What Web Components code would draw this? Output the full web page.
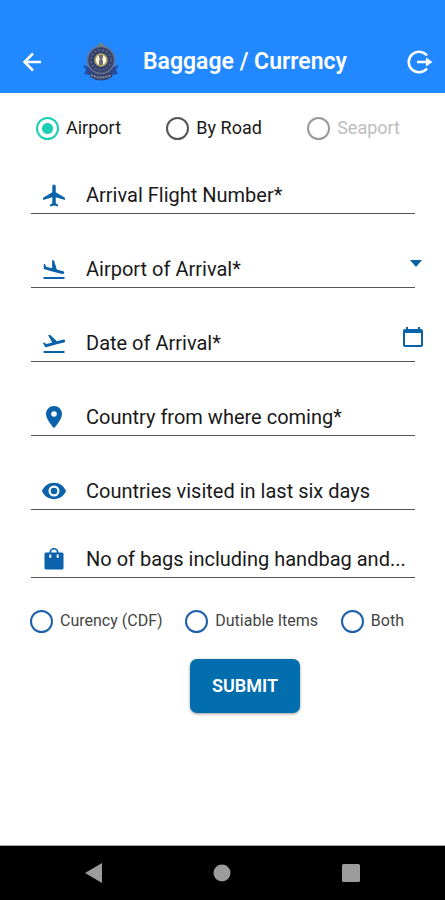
<!DOCTYPE html>
<html lang="en">
<head>
<meta charset="utf-8">
<meta name="viewport" content="width=device-width, initial-scale=1">
<title>Baggage / Currency</title>
<style>
  :root { --brand: #2188ff; --accent: #0a62ab; --submit: #036eae; }
  body { margin: 0; background: #fff; color: #191919; font-family: Roboto, "Liberation Sans", sans-serif; }
</style>
</head>
<body>
<declaration-page></declaration-page>

<script>
const icons = {
  flight: '<path d="M21 16v-2l-8-5V3.500a1.500 1.500 0 0 0-3 0V9l-8 5v2l8-2.500V19l-2 1.500V22l3.500-1 3.500 1v-1.500L13 19v-5.500l8 2.500z" transform="matrix(1.150 0 0 1.100 -1.200 -.7)"/>',
  landing: '<path d="M1.500 20h21v2h-21zM9.680 14.270l4.350 1.160 6.310 1.620c.8.210 1.620-.260 1.840-1.060.210-.8-.260-1.620-1.060-1.840l-6.310-1.620-2.760-9.020L10.120 3v8.280L4.150 9.650l-.930-2.320-1.450-.390v5.170l1.600.430 6.310 1.730z"/>',
  takeoff: '<path d="M1.500 20h21v2h-21zM23.070 9.640c-.210-.8-1.040-1.280-1.840-1.060L14.920 10.200l-6.900-6.430-1.930.510 4.140 7.170-5.970 1.530-1.970-1.540-1.450.390 1.820 3.160.770 1.330 1.600-.430 6.310-1.620 4.350-1.160L22 11.490c.810-.230 1.280-1.050 1.070-1.850z"/>',
  place: '<path d="M12 1C7.600 1 4 4.500 4 8.900 4 14.800 12 23 12 23s8-8.200 8-14.100C20 4.500 16.400 1 12 1zm0 10.800a2.800 2.800 0 1 1 0-5.600 2.800 2.800 0 0 1 0 5.600z"/>',
  eye: '<path d="M12 3.800C6.500 3.800 1.900 7.200 0 12c1.900 4.800 6.500 8.200 12 8.200s10.100-3.400 12-8.200c-1.900-4.800-6.500-8.200-12-8.200zM12 17.500a5.500 5.500 0 1 1 0-11 5.500 5.500 0 0 1 0 11zm0-8.800a3.300 3.300 0 1 0 0 6.600 3.300 3.300 0 0 0 0-6.600z"/>',
  bag: '<path fill-rule="evenodd" d="M2.500 7Q2.500 5.500 4 5.500H7.500V5a4.500 4 0 0 1 9 0V5.500H20Q21.500 5.500 21.500 7V21q0 1.500-1.500 1.500h-16Q2.500 22.500 2.500 21zM9.300 5.500h5.400V5a2.700 2.400 0 0 0-5.400 0zM7.300 7.500v2.500a1 1 0 0 0 2 0V7.500zm7.400 0v2.500a1 1 0 0 0 2 0V7.500z"/>',
};

class AppEmblem extends HTMLElement {
  constructor() {
    super();
    this.attachShadow({ mode: 'open' }).innerHTML = `
      <style>:host { display: block; width: 38px; height: 40px; } svg { display: block; }</style>
      <svg width="38" height="40" viewBox="0 0 38 40" role="img" aria-label="Customs emblem">
        <path d="M1 23l6 2 24 0 6-2-3 5 2 4-6 1q-11 9-22 0l-6-1 2-4z" fill="#294b9c"/>
        <circle cx="19" cy="18" r="13.500" fill="#354373" stroke="#6e7187" stroke-width="1.500"/>
        <circle cx="19" cy="18" r="10" fill="none" stroke="#62677c" stroke-width="1.500" stroke-dasharray="2 2"/>
        <circle cx="19" cy="18" r="6" fill="#fff8dc" stroke="#b1a45c" stroke-width="1.500"/>
        <path d="M17 13h4v3l-1 1 1 2v4h-4v-4l1-2-1-1z" fill="#6b7075"/>
        <path d="M7 28q12 9 24 0l-1 7q-11 7-22 0z" fill="#34436f"/>
        <path d="M9 33q10 5 20 0" fill="none" stroke="#8d92a0" stroke-width="1.800" stroke-dasharray="2 1"/>
        <path d="M15 5q4-4 8 0" fill="none" stroke="#777f78" stroke-width="1.500"/>
        <circle cx="19" cy="2" r="1.500" fill="#6d8b68"/>
      </svg>`;
  }
}
customElements.define('app-emblem', AppEmblem);

class AppHeader extends HTMLElement {
  constructor() {
    super();
    this.attachShadow({ mode: 'open' }).innerHTML = `
      <style>
        :host { display: block; background: var(--brand); color: #fff; padding: 32px 0 1px; }
        header { display: flex; align-items: center; height: 60px; padding: 0 11px 0 20px; }
        button { display: block; border: 0; padding: 0; background: none; color: inherit; }
        svg { display: block; }
        app-emblem { margin-left: 38px; }
        h1 { margin: 0 auto 0 23px; font-size: 23px; line-height: 28px; font-weight: 600; white-space: nowrap; }
      </style>
      <header>
        <button type="button" aria-label="Back">
          <svg width="24" height="24" viewBox="0 0 24 24" fill="none" stroke="currentColor" stroke-width="2.500"><path d="M21 12H5M13 3.500L4.500 12l8.500 8.500"/></svg>
        </button>
        <app-emblem></app-emblem>
        <h1><slot></slot></h1>
        <button type="button" aria-label="Log out">
          <svg width="28" height="28" viewBox="0 0 28 28" fill="none" stroke="currentColor" stroke-width="2.500"><path d="M21 7.500a10.300 10.300 0 1 0 0 13M11 14h10"/><path d="M20 9.500l6.500 4.500-6.500 4.500z" fill="currentColor" stroke="none"/></svg>
        </button>
      </header>`;
  }
}
customElements.define('app-header', AppHeader);

class RadioSet extends HTMLElement {
  connectedCallback() {
    const name = this.getAttribute('name');
    const options = this.getAttribute('options').split('|');
    const chosen = this.getAttribute('value');
    const off = this.getAttribute('unavailable');
    this.attachShadow({ mode: 'open' }).innerHTML = `
      <style>
        :host { display: block; font-size: 18px; line-height: 24px; --ring: #555; }
        :host([compact]) { font-size: 16px; color: #444; --ring: #1c60ab; }
        div { display: flex; justify-content: space-between; }
        label { display: flex; align-items: center; gap: 7px; white-space: nowrap; }
        input { appearance: none; box-sizing: border-box; width: 23px; height: 23px; margin: 0; border: 2px solid var(--ring); border-radius: 50%; }
        input:checked { border-color: #1bcfb4; background: radial-gradient(circle, #1bcfb4 5px, transparent 6px); }
        .off { color: #bdbdbd; --ring: #999; }
      </style>
      <div role="radiogroup" aria-label="${this.getAttribute('label')}">
        ${options.map(o => `<label class="${o === off ? 'off' : ''}"><input type="radio" name="${name}" value="${o}"${o === chosen ? ' checked' : ''}${o === off ? ' disabled' : ''}><span>${o}</span></label>`).join('')}
      </div>`;
  }
}
customElements.define('radio-set', RadioSet);

class FormField extends HTMLElement {
  connectedCallback() {
    const label = this.getAttribute('label');
    const kind = this.getAttribute('kind');
    const control = kind === 'select'
      ? `<select aria-label="${label}"><option>${label}</option></select>`
      : `<input type="text" aria-label="${label}" placeholder="${label}">`;
    const trailing = kind === 'select'
      ? '<svg class="caret" width="12" height="7" viewBox="0 0 12 7" aria-hidden="true"><path d="M0 0h12L6 7z"/></svg>'
      : kind === 'date'
      ? '<button type="button" aria-label="Choose date"><svg width="20" height="22" viewBox="0 0 20 22"><path fill-rule="evenodd" d="M3 1h2v2h10V1h2v2h1q2 0 2 2v14q0 2-2 2H2q-2 0-2-2V5q0-2 2-2h1zM2 7v12h16V7z"/></svg></button>'
      : '';
    this.attachShadow({ mode: 'open' }).innerHTML = `
      <style>
        :host { display: block; }
        div { position: relative; display: flex; align-items: center; height: 36px; padding: 2px 0 0 11px; gap: 20px; border-bottom: 1px solid #555; }
        svg { display: block; flex: none; fill: var(--accent); }
        input, select { appearance: none; flex: 1; min-width: 0; height: 36px; margin: 0; padding: 0; border: 0; outline: 0; background: none; color: inherit; font: inherit; font-size: 20px; text-overflow: ellipsis; }
        input::placeholder { color: inherit; opacity: 1; }
        .caret { position: absolute; right: -7px; top: 11px; pointer-events: none; }
        button { position: absolute; right: -8px; top: 3px; padding: 0; border: 0; background: none; }
      </style>
      <div><svg width="24" height="24" viewBox="0 0 24 24" aria-hidden="true">${icons[this.getAttribute('icon')]}</svg>${control}${trailing}</div>`;
  }
}
customElements.define('form-field', FormField);

class SubmitButton extends HTMLElement {
  constructor() {
    super();
    this.attachShadow({ mode: 'open' }).innerHTML = `
      <style>
        :host { display: block; }
        button { display: block; padding: 14px 22px; border: 0; border-radius: 7px; background: var(--submit); color: #fff; font: 600 18px/26px Roboto, "Liberation Sans", sans-serif; box-shadow: 0 1px 3px #0006; }
      </style>
      <button type="submit"><slot></slot></button>`;
  }
}
customElements.define('submit-button', SubmitButton);

class SystemBar extends HTMLElement {
  constructor() {
    super();
    this.attachShadow({ mode: 'open' }).innerHTML = `
      <style>
        :host { display: block; background: #000; border-top: 1px solid #aaa; }
        nav { display: flex; justify-content: space-around; align-items: center; height: 54px; padding: 0 30px; }
        button { border: 0; padding: 0; background: none; }
        svg { display: block; fill: #9c9c9c; }
      </style>
      <nav aria-label="System">
        <button type="button" aria-label="Back"><svg width="20" height="20"><path d="M18 0v20L1 10z"/></svg></button>
        <button type="button" aria-label="Home"><svg width="20" height="20"><circle cx="10" cy="10" r="8.500"/></svg></button>
        <button type="button" aria-label="Recent apps"><svg width="20" height="20"><rect x="1" y="1" width="18" height="18" rx="1.500"/></svg></button>
      </nav>`;
  }
}
customElements.define('system-bar', SystemBar);

class DeclarationPage extends HTMLElement {
  constructor() {
    super();
    this.attachShadow({ mode: 'open' }).innerHTML = `
      <style>
        :host { display: flex; flex-direction: column; min-height: 100vh; }
        main { flex: 1; }
        form { display: flex; flex-direction: column; padding: 23px 30px 24px; }
        .mode { padding: 0 15px 0 6px; }
        .fields { display: flex; flex-direction: column; gap: 35px; padding: 35px 0 0 1px; }
        .last { padding: 29px 0 0 1px; }
        .items { padding: 31px 11px 0 0; }
        .actions { display: flex; justify-content: center; padding: 26px 0 0 45px; }
      </style>
      <app-header>Baggage / Currency</app-header>
      <main>
        <form>
          <radio-set class="mode" name="mode" label="Arrival by" options="Airport|By Road|Seaport" value="Airport" unavailable="Seaport"></radio-set>
          <div class="fields">
            <form-field icon="flight" label="Arrival Flight Number*"></form-field>
            <form-field icon="landing" kind="select" label="Airport of Arrival*"></form-field>
            <form-field icon="takeoff" kind="date" label="Date of Arrival*"></form-field>
            <form-field icon="place" label="Country from where coming*"></form-field>
            <form-field icon="eye" label="Countries visited in last six days"></form-field>
          </div>
          <form-field class="last" icon="bag" label="No of bags including handbag and..."></form-field>
          <radio-set class="items" compact name="items" label="Declare" options="Curency (CDF)|Dutiable Items|Both"></radio-set>
          <div class="actions"><submit-button>SUBMIT</submit-button></div>
        </form>
      </main>
      <system-bar></system-bar>`;
  }
}
customElements.define('declaration-page', DeclarationPage);
</script>
</body>
</html>
